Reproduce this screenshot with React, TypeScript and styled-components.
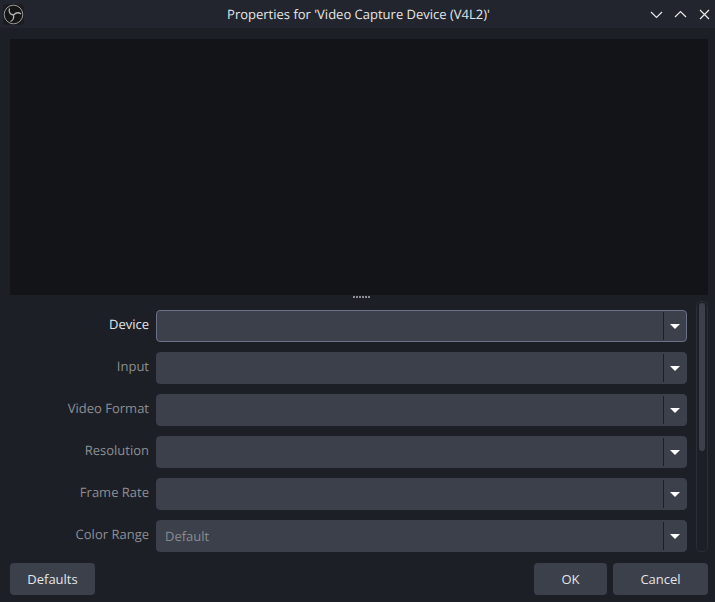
import React from "react";
import styled, { createGlobalStyle } from "styled-components";

const Global = createGlobalStyle`
  html, body { margin: 0; padding: 0; background: #1d1f26; }
  body { font-family: "Open Sans", "Noto Sans", sans-serif; font-size: 13px; text-rendering: geometricPrecision; }
`;
const Windowed = styled.div`
  width: 715px; height: 602px; display: flex; flex-direction: column; overflow: hidden; background: #1d1f26;
`;
const TitleBar = styled.header`
  height: 28px; flex: none; background: #22252d; display: flex; align-items: center; padding: 0 4px 0 3px;
`;
const AppIcon = styled.svg`width: 21px; height: 21px; flex: none; margin-left: 0;`;
const Title = styled.div`
  flex: 1; text-align: center; color: #e4e5e8; font-size: 13px; line-height: 28px; padding-left: 43px;
`;
const WinButtons = styled.div`display: flex; gap: 11px; align-items: center;`;
const WinIcon = styled.svg`width: 13px; height: 13px; display: block;`;
const Preview = styled.div`
  height: 256px; flex: none; margin: 11px 7px 0 10px; background: #131417;
`;
const Splitter = styled.div`height: 5px; box-sizing: border-box; padding: 1px 0 0 7px; flex: none; display: flex; justify-content: center; align-items: flex-start;`;
const Dots = styled.div`width: 17px; height: 2px; background: repeating-linear-gradient(90deg, #8a8c92 0 2px, transparent 2px 3px);`;
const Middle = styled.div`height: 255px; flex: none; display: flex; padding: 0 7px 0 0;`;
const Form = styled.div`flex: 1; display: flex; flex-direction: column; gap: 10px; padding-top: 10px; overflow: hidden;`;
const Row = styled.div`display: flex; height: 32px; flex: none;`;
const Label = styled.label<{ $active?: boolean }>`
  width: 149px; flex: none; text-align: right; font-size: 13px; line-height: 29px; color: ${p => (p.$active ? "#e4e5e8" : "#8c8e93")};
`;
const Combo = styled.div<{ $focus?: boolean }>`
  margin-left: 7px; width: 531px; height: 32px; box-sizing: border-box; background: #3c404b; border-radius: 4px;
  border: 1px solid ${p => (p.$focus ? "#6a7086" : "#3c404b")}; display: flex; align-items: stretch;
`;
const Value = styled.div`flex: 1; padding-left: 8px; font-size: 13px; line-height: 31px; color: #888a90;`;
const Drop = styled.div`
  width: 22px; flex: none; border-left: 1px solid #1d1f26; display: flex; align-items: center; justify-content: center;
  margin-top: 1px; margin-bottom: 1px;
`;
const Arrow = styled.svg`width: 10px; height: 5px; display: block;`;
const Scroll = styled.div`
  width: 12px; flex: none; margin: 1px 0 3px 9px; box-sizing: border-box; border: 1px solid #2b2e37; border-radius: 5px; padding: 1px 2px;
  display: flex; align-items: flex-start;
`;
const Thumb = styled.div`width: 100%; height: 148px; background: #3c404b; border-radius: 3px;`;
const Footer = styled.footer`display: flex; padding: 8px 7px 0 10px; gap: 6px;`;
const Spacer = styled.div`flex: 1;`;
const Btn = styled.button<{ $w: number }>`
  width: ${p => p.$w}px; height: 32px; background: #3c404b; border: 0; border-radius: 4px; color: #e4e5e8;
  font-family: inherit; font-size: 13px; padding: 0;
`;

const rows: [string, string][] = [
  ["Device", ""], ["Input", ""], ["Video Format", ""], ["Resolution", ""], ["Frame Rate", ""], ["Color Range", "Default"],
];

export default function App() {
  return (
    <Windowed>
      <Global />
      <TitleBar>
        <AppIcon viewBox="0 0 21 21">
          <rect x="0" y="0" width="21" height="21" rx="4" fill="#1c1c1f" />
          <circle cx="10.5" cy="10.5" r="9.3" fill="#151518" stroke="#9a9a9a" strokeWidth="1" />
          <path d="M10.5 11C8 10.5 5 9 6.5 4.5M10.5 11C12.5 9 15 7.5 18 10M10.5 11C11 13.5 10 16.5 7.5 17.5" fill="none" stroke="#b4b4b4" strokeWidth="1.3" />
        </AppIcon>
        <Title>Properties for 'Video Capture Device (V4L2)'</Title>
        <WinButtons>
          <WinIcon viewBox="0 0 13 13"><path d="M1 4l5.5 5.5L12 4" fill="none" stroke="#e8e8e8" strokeWidth="1.2" /></WinIcon>
          <WinIcon viewBox="0 0 13 13"><path d="M1 9l5.5-5.5L12 9" fill="none" stroke="#e8e8e8" strokeWidth="1.2" /></WinIcon>
          <WinIcon viewBox="0 0 13 13"><path d="M2 2l9 9M11 2l-9 9" fill="none" stroke="#e8e8e8" strokeWidth="1.2" /></WinIcon>
        </WinButtons>
      </TitleBar>
      <Preview />
      <Splitter><Dots /></Splitter>
      <Middle>
        <Form>
          {rows.map(([l, v], i) => (
            <Row key={l}>
              <Label $active={i === 0}>{l}</Label>
              <Combo $focus={i === 0}>
                <Value>{v}</Value>
                <Drop><Arrow viewBox="0 0 10 5"><path d="M0 0h10L5 5z" fill="#fff" /></Arrow></Drop>
              </Combo>
            </Row>
          ))}
        </Form>
        <Scroll><Thumb /></Scroll>
      </Middle>
      <Footer>
        <Btn $w={85}>Defaults</Btn>
        <Spacer />
        <Btn $w={73}>OK</Btn>
        <Btn $w={95}>Cancel</Btn>
      </Footer>
    </Windowed>
  );
}
